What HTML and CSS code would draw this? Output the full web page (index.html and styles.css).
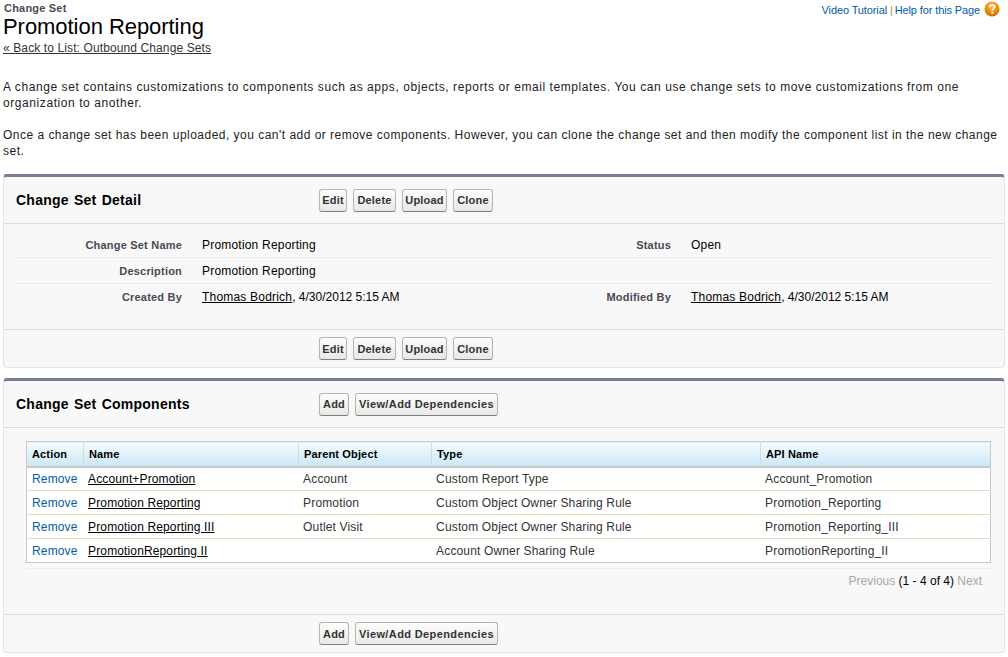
FILE: index.html
```html
<!DOCTYPE html>
<html lang="en">
<head>
<meta charset="utf-8">
<title>Promotion Reporting</title>
<link rel="stylesheet" href="styles.css">
</head>
<body>
<header class="page-head">
  <div class="titles">
    <div class="eyebrow">Change Set</div>
    <h1 class="page-title">Promotion Reporting</h1>
    <a class="back" href="#">« Back to List: Outbound Change Sets</a>
  </div>
  <div class="help">
    <a href="#">Video Tutorial</a><span class="sep">|</span><a href="#">Help for this Page</a>
    <svg class="help-icon" width="16" height="16" viewBox="0 0 16 16" aria-hidden="true">
      <defs>
        <radialGradient id="hg" cx="50%" cy="30%" r="75%">
          <stop offset="0" stop-color="#f9c14d"/>
          <stop offset="0.6" stop-color="#e98a10"/>
          <stop offset="1" stop-color="#b96a08"/>
        </radialGradient>
      </defs>
      <circle cx="8" cy="8" r="7.5" fill="url(#hg)"/>
      <path d="M5.6 6.2C5.6 4.7 6.7 4 8 4s2.5.8 2.5 2.1c0 1-.6 1.5-1.3 2-.6.4-.9.7-.9 1.4" fill="none" stroke="#fff" stroke-width="1.7"/>
      <rect x="7.3" y="10.7" width="1.9" height="1.9" fill="#fff"/>
    </svg>
  </div>
</header>
<section class="intro">
  <p class="intro-a">A change set contains customizations to components such as apps, objects, reports or email templates. You can use change sets to move customizations from one organization to another.</p>
  <p class="intro-b">Once a change set has been uploaded, you can't add or remove components. However, you can clone the change set and then modify the component list in the new change set.</p>
</section>

<section class="panel">
  <div class="panel-head">
    <h2 class="panel-title">Change Set Detail</h2>
    <div class="buttons">
      <button class="btn btn-edit">Edit</button><button class="btn btn-delete">Delete</button><button class="btn btn-upload">Upload</button><button class="btn btn-clone">Clone</button>
    </div>
  </div>
  <div class="detail">
    <div class="row">
      <div class="label">Change Set Name</div><div class="value">Promotion Reporting</div>
      <div class="label">Status</div><div class="value">Open</div>
    </div>
    <div class="row">
      <div class="label">Description</div><div class="value">Promotion Reporting</div>
      <div class="label"></div><div class="value"></div>
    </div>
    <div class="row row-last">
      <div class="label">Created By</div><div class="value"><a class="link" href="#">Thomas Bodrich</a><span class="date">, 4/30/2012 5:15 AM</span></div>
      <div class="label">Modified By</div><div class="value"><a class="link" href="#">Thomas Bodrich</a><span class="date">, 4/30/2012 5:15 AM</span></div>
    </div>
  </div>
  <div class="panel-foot">
    <div class="buttons">
      <button class="btn btn-edit">Edit</button><button class="btn btn-delete">Delete</button><button class="btn btn-upload">Upload</button><button class="btn btn-clone">Clone</button>
    </div>
  </div>
</section>

<section class="panel panel-second">
  <div class="panel-head">
    <h2 class="panel-title">Change Set Components</h2>
    <div class="buttons">
      <button class="btn">Add</button><button class="btn btn-wide">View/Add Dependencies</button>
    </div>
  </div>
  <div class="list-wrap">
    <table class="list">
      <colgroup>
        <col class="c-action"><col class="c-name"><col class="c-parent"><col class="c-type"><col>
      </colgroup>
      <thead>
        <tr><th>Action</th><th>Name</th><th>Parent Object</th><th>Type</th><th>API Name</th></tr>
      </thead>
      <tbody>
        <tr><td><a class="action" href="#">Remove</a></td><td><a class="link" href="#">Account+Promotion</a></td><td>Account</td><td>Custom Report Type</td><td>Account_Promotion</td></tr>
        <tr><td><a class="action" href="#">Remove</a></td><td><a class="link" href="#">Promotion Reporting</a></td><td>Promotion</td><td>Custom Object Owner Sharing Rule</td><td>Promotion_Reporting</td></tr>
        <tr><td><a class="action" href="#">Remove</a></td><td><a class="link" href="#">Promotion Reporting III</a></td><td>Outlet Visit</td><td>Custom Object Owner Sharing Rule</td><td>Promotion_Reporting_III</td></tr>
        <tr><td><a class="action" href="#">Remove</a></td><td><a class="link" href="#">PromotionReporting II</a></td><td></td><td>Account Owner Sharing Rule</td><td>PromotionReporting_II</td></tr>
      </tbody>
    </table>
    <div class="pager"><span class="muted">Previous</span> <b class="count">(1 - 4 of 4)</b> <span class="muted">Next</span></div>
  </div>
  <div class="panel-foot">
    <div class="buttons">
      <button class="btn">Add</button><button class="btn btn-wide">View/Add Dependencies</button>
    </div>
  </div>
</section>
</body>
</html>
```
FILE: styles.css
```css
* { box-sizing: border-box; }
html, body { height: 100%; }
body {
  margin: 0;
  padding: 0 3px;
  background: #fff;
  color: #222;
  font: 12px/14px "Liberation Sans", Arial, sans-serif;
  overflow: hidden;
}
a { color: inherit; }

.page-head { display: flex; justify-content: space-between; height: 56px; }
.titles { display: flex; flex-direction: column; align-items: flex-start; }
.eyebrow { font-size: 11px; font-weight: bold; color: #4a4a56; line-height: 14px; margin-top: 1px; padding-left: 1px; letter-spacing: 0.2px; }
.page-title { margin: 0; font-size: 22px; font-weight: normal; line-height: 23px; color: #000; letter-spacing: -0.05px; }
.back { color: #333435; line-height: 13px; margin-top: 4px; font-size: 12px; letter-spacing: 0.11px; }
.help { display: flex; align-items: flex-start; height: 18px; padding: 2px 5px 0 0; font-size: 11px; color: #015ba7; line-height: 16px; letter-spacing: -0.12px; }
.help a { text-decoration: none; color: #015ba7; }
.sep { color: #b5792c; margin: 0 2px 0 3px; }
.help-icon { margin-left: 4px; margin-top: -1px; }

.intro { padding-top: 23px; height: 118px; }
.intro p { margin: 0 0 16px; color: #222; line-height: 16px; }
.intro-a { letter-spacing: 0.575px; }
.intro-b { letter-spacing: 0.48px; }

.panel {
  border-top: 3px solid #747e96;
  border-left: 1px solid #e4e4e4;
  border-right: 1px solid #e4e4e4;
  border-bottom: 1px solid #e4e4e4;
  border-radius: 4px;
  background: #f8f8f8;
  height: 194px;
}
.panel-second { margin-top: 10px; height: 275px; }
.panel-head {
  display: flex;
  align-items: center;
  height: 47px;
  border-bottom: 1px solid #dbdbdb;
}
.panel-title { margin: 0; width: 315px; padding-left: 12px; font-size: 14px; line-height: 16px; font-weight: bold; color: #000; flex: none; word-spacing: 1px; letter-spacing: 0.25px; }
.buttons { display: flex; gap: 6px; }
.btn {
  font: bold 11px/14px "Liberation Sans", Arial, sans-serif;
  letter-spacing: 0.2px;
  color: #333;
  height: 23px;
  padding: 0 3px;
  border: 1px solid #b5b5b5;
  border-bottom-color: #7f7f7f;
  border-radius: 3px;
  background: linear-gradient(#fdfdfd, #e8e8e8);
}
.btn-edit { width: 28px; padding: 0; }
.btn-delete { width: 43px; padding: 0; }
.btn-upload { width: 45px; padding: 0; }
.btn-clone { width: 40px; padding: 0; }
.btn-wide { letter-spacing: 0.38px; }

.detail { height: 105px; padding: 8px 12px 0 11px; }
.row { display: grid; grid-template-columns: 167px 320px 169px 1fr; height: 26px; padding-top: 6px; border-bottom: 1px solid #ececec; align-items: start; }
.row-last { border-bottom: 0; }
.label { text-align: right; font-size: 11px; font-weight: bold; color: #4a4a56; letter-spacing: 0.2px; }
.value { padding-left: 20px; color: #000; letter-spacing: 0.2px; }
.date { letter-spacing: 0; }
.link { color: #000; text-decoration: underline; }

.panel-foot { height: 38px; border-top: 1px solid #dbdbdb; padding: 7px 0 0 315px; }

.list-wrap { height: 186px; padding: 13px 14px 0 22px; }
.list { width: 965px; border-collapse: collapse; table-layout: fixed; background: #fff; border: 1px solid #c8c8c8; }
.c-action { width: 57px; }
.c-name { width: 215px; }
.c-parent { width: 133px; }
.c-type { width: 329px; }
.list th {
  height: 25px;
  padding: 0 5px;
  text-align: left;
  font-size: 11px;
  font-weight: bold;
  letter-spacing: 0.15px;
  color: #000;
  background: linear-gradient(#f4fbfe, #cbe8f6);
  border-left: 1px solid #cfdde3;
  border-bottom: 2px solid #c8c8c8;
}
.list th:first-child { border-left: 0; }
.list td { height: 24px; padding: 0 4.6px; border-top: 1px solid #e3deb8; color: #333; vertical-align: middle; letter-spacing: 0.15px; }
.list td:first-child { padding-left: 5px; }
.list td .link { letter-spacing: 0.13px; }
.list tbody tr:first-child td { border-top: 0; }
.action { color: #015ba7; text-decoration: none; display: inline-block; padding-top: 1px; }
.pager { margin: 5px -1px 0 0; padding-top: 5px; border-top: 1px solid #ececec; text-align: right; padding-right: 9px; }
.muted { color: #a8a8a8; }
.count { font-weight: normal; color: #000; }
```
